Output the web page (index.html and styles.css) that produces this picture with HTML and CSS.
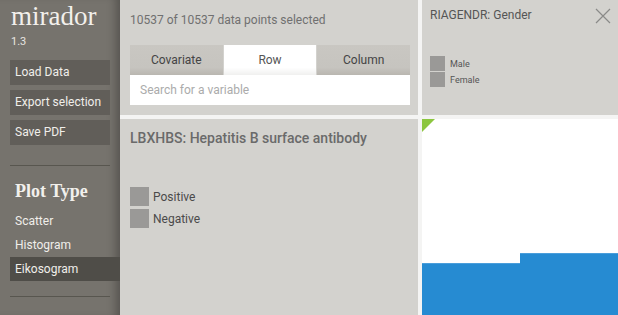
FILE: index.html
```html
<!DOCTYPE html>
<html>
<head>
<meta charset="utf-8">
<link rel="stylesheet" href="styles.css">
</head>
<body>
<div class="app">
  <aside class="sidebar">
    <div class="brand">mirador</div>
    <div class="version">1.3</div>
    <div class="actions">
      <div class="btn">Load Data</div>
      <div class="btn">Export selection</div>
      <div class="btn">Save PDF</div>
    </div>
    <hr class="rule">
    <div class="section-title">Plot Type</div>
    <ul class="plot-types">
      <li>Scatter</li>
      <li>Histogram</li>
      <li class="active">Eikosogram</li>
    </ul>
    <hr class="rule rule-bottom">
  </aside>
  <main class="grid">
    <section class="panel selector">
      <div class="count">10537 of 10537 data points selected</div>
      <div class="tabs">
        <div class="tab">Covariate</div>
        <div class="tab tab-active">Row</div>
        <div class="tab">Column</div>
      </div>
      <div class="search">Search for a variable</div>
    </section>
    <section class="panel colvar">
      <div class="colvar-head">
        <span class="colvar-title">RIAGENDR: Gender</span>
        <svg class="close" width="16" height="16" viewBox="0 0 16 16"><path d="M1 1L15 15M15 1L1 15" stroke="#8a8a88" stroke-width="1.2" fill="none"/></svg>
      </div>
      <ul class="legend small">
        <li><span class="sw"></span>Male</li>
        <li><span class="sw"></span>Female</li>
      </ul>
    </section>
    <section class="panel rowvar">
      <div class="rowvar-title">LBXHBS: Hepatitis B surface antibody</div>
      <ul class="legend large">
        <li><span class="sw"></span>Positive</li>
        <li><span class="sw"></span>Negative</li>
      </ul>
    </section>
    <section class="plot">
      <div class="corner"></div>
      <div class="bars">
        <div class="bar" style="height:52px"></div>
        <div class="bar" style="height:62px"></div>
      </div>
    </section>
  </main>
</div>
</body>
</html>
```

FILE: styles.css
```css
* { box-sizing: border-box; }
html, body { margin: 0; padding: 0; }
body {
  width: 618px;
  height: 315px;
  overflow: hidden;
  font-family: Roboto, "Liberation Sans", sans-serif;
  background: #f4f4f3;
}
.app {
  display: flex;
  height: 315px;
}
.sidebar {
  width: 120px;
  flex: none;
  background: #76736d;
  box-shadow: inset -10px 0 10px -6px rgba(0,0,0,0.28);
  padding: 0 0 0 10px;
  color: #eeece8;
}
.brand {
  font-family: "Liberation Serif", serif;
  font-size: 27px;
  line-height: 27px;
  padding-top: 3px;
  margin-left: 1px;
  color: #f2f0ec;
}
.version {
  font-size: 11px;
  line-height: 12px;
  margin-top: 6px;
  margin-left: 1px;
  color: #e8e6e2;
}
.actions {
  display: flex;
  flex-direction: column;
  gap: 5px;
  margin-top: 12px;
  width: 100px;
}
.btn {
  height: 25px;
  line-height: 25px;
  background: #615e59;
  padding-left: 5px;
  font-size: 12px;
  color: #f0eeea;
}
.rule {
  border: 0;
  border-top: 1px solid #58564f;
  width: 100px;
  margin: 20px 0 0 0;
  height: 0;
}
.section-title {
  font-family: "Liberation Serif", serif;
  font-weight: bold;
  font-size: 18px;
  line-height: 20px;
  margin-top: 15px;
  padding-left: 5px;
  color: #f2f0ec;
}
.plot-types {
  list-style: none;
  margin: 8px 0 0 0;
  padding: 0;
}
.plot-types li {
  height: 24px;
  line-height: 24px;
  font-size: 12px;
  padding-left: 5px;
  color: #f0eeea;
}
.plot-types li.active {
  background: #4f4d48;
}
.rule-bottom {
  margin-top: 15px;
}
.grid {
  flex: 1;
  display: grid;
  grid-template-columns: 298px 196px;
  grid-template-rows: 115px 196px;
  gap: 4px;
  background: #f4f4f3;
}
.panel {
  background: #d3d2ce;
}
.selector {
  padding: 12px 8px 0 10px;
}
.count {
  font-size: 12px;
  line-height: 16px;
  color: #707070;
}
.tabs {
  display: flex;
  gap: 1px;
  margin-top: 17px;
  height: 30px;
}
.tab {
  flex: 1;
  text-align: center;
  line-height: 30px;
  font-size: 12px;
  color: #444;
  background: linear-gradient(#c9c7c2 0%, #c6c4bf 75%, #b9b6b0 100%);
}
.tab-active {
  background: linear-gradient(#ffffff 0%, #ffffff 75%, #f0f0ef 100%);
  color: #555;
}
.search {
  height: 30px;
  line-height: 30px;
  background: #fff;
  padding-left: 10px;
  font-size: 12px;
  color: #ababab;
}
.colvar {
  padding: 8px 7px 0 8px;
}
.colvar-head {
  display: flex;
  justify-content: space-between;
  align-items: flex-start;
}
.colvar-title {
  font-size: 12px;
  line-height: 14px;
  color: #555;
}
.legend {
  list-style: none;
  margin: 0;
  padding: 0;
}
.legend li {
  display: flex;
  align-items: center;
}
.legend .sw {
  background: #9a9997;
  flex: none;
}
.legend.small {
  margin-top: 32px;
}
.legend.small li {
  height: 15px;
  margin-bottom: 1px;
  font-size: 9px;
  color: #555;
}
.legend.small .sw {
  width: 15px;
  height: 15px;
  margin-right: 5px;
}
.rowvar {
  padding: 10px 10px 0 10px;
}
.rowvar-title {
  font-size: 14px;
  line-height: 18px;
  font-weight: 500;
  color: #6a6a6a;
}
.legend.large {
  margin-top: 40px;
}
.legend.large li {
  height: 19px;
  margin-bottom: 3px;
  font-size: 12px;
  color: #4a4a4a;
}
.legend.large .sw {
  width: 19px;
  height: 19px;
  margin-right: 4px;
}
.plot {
  background: #ffffff;
  position: relative;
  display: flex;
  flex-direction: column;
  justify-content: flex-end;
}
.corner {
  position: absolute;
  left: 0;
  top: 0;
  width: 0;
  height: 0;
  border-top: 13px solid #8cc63f;
  border-right: 13px solid transparent;
}
.bars {
  display: flex;
  align-items: flex-end;
}
.bar {
  flex: 1;
  background: #268bd2;
  border-top: 1px solid #4a9edb;
}
```
